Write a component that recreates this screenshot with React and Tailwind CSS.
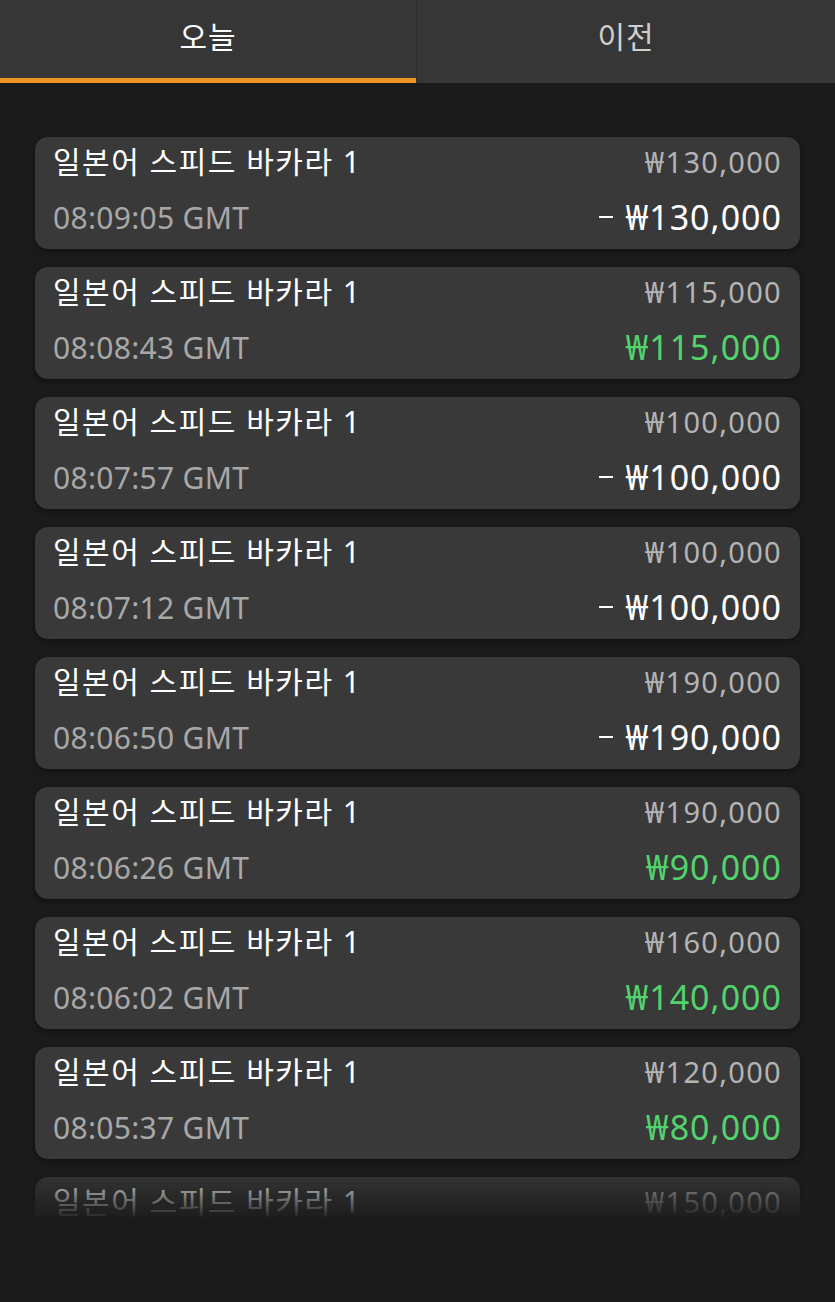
const rows = [
  { time: '08:09:05 GMT', bet: '₩130,000', result: '₩130,000', win: false },
  { time: '08:08:43 GMT', bet: '₩115,000', result: '₩115,000', win: true },
  { time: '08:07:57 GMT', bet: '₩100,000', result: '₩100,000', win: false },
  { time: '08:07:12 GMT', bet: '₩100,000', result: '₩100,000', win: false },
  { time: '08:06:50 GMT', bet: '₩190,000', result: '₩190,000', win: false },
  { time: '08:06:26 GMT', bet: '₩190,000', result: '₩90,000', win: true },
  { time: '08:06:02 GMT', bet: '₩160,000', result: '₩140,000', win: true },
  { time: '08:05:37 GMT', bet: '₩120,000', result: '₩80,000', win: true },
  { time: '08:05:12 GMT', bet: '₩150,000', result: '₩150,000', win: true },
];

function HistoryCard({ row }) {
  return (
    <div className="h-[112px] shrink-0 rounded-[13px] bg-[#393939] px-[18px] pt-[7px] shadow-[0_2px_6px_rgba(0,0,0,0.45)] flex flex-col gap-[19px]">
      <div className="flex items-center justify-between h-[36px]">
        <span className="text-[30px] leading-[36px] tracking-[1.5px] text-white">일본어 스피드 바카라 1</span>
        <span className="text-[29px] leading-[36px] tracking-[1.3px] text-[#b4b4b4]">{row.bet}</span>
      </div>
      <div className="flex items-center justify-between h-[36px]">
        <span className="pt-[2px] text-[30px] leading-[36px] tracking-[0.3px] text-[#a8a8a8]">{row.time}</span>
        <span className={`flex items-center text-[34px] leading-[36px] tracking-[1px] ${row.win ? 'text-[#52d36c]' : 'text-white'}`}>
          {!row.win && <span className="mr-[12px] inline-block w-[14px] h-[2px] bg-white" />}
          {row.result}
        </span>
      </div>
    </div>
  );
}

export default function App() {
  return (
    <div
      className="relative w-[835px] h-[1302px] overflow-hidden bg-[#1b1b1b] flex flex-col"
      style={{ fontFamily: '"Noto Sans", "Noto Sans CJK KR", sans-serif' }}
    >
      {/* Tabs */}
      <div className="flex h-[83px] shrink-0 bg-[#363636]">
        <div className="w-[417px] flex flex-col border-r border-[#2c2c2c]">
          <div className="flex-1 flex items-center justify-center pb-[5px] text-[30px] tracking-[1px] text-white">오늘</div>
          <div className="h-[5px] bg-[#ee9426]" />
        </div>
        <div className="flex-1 flex items-center justify-center pb-[10px] text-[30px] tracking-[1px] text-[#cfcfcf]">이전</div>
      </div>

      {/* List */}
      <div className="flex flex-col gap-[18px] px-[35px] pt-[54px]">
        {rows.map((row, i) => (
          <HistoryCard key={i} row={row} />
        ))}
      </div>

      {/* bottom fade */}
      <div className="absolute left-0 right-0 top-[1165px] h-[55px] bg-gradient-to-b from-[#1b1b1b]/0 to-[#1b1b1b]" />
      <div className="absolute left-0 right-0 top-[1220px] bottom-0 bg-[#1b1b1b]" />
    </div>
  );
}
